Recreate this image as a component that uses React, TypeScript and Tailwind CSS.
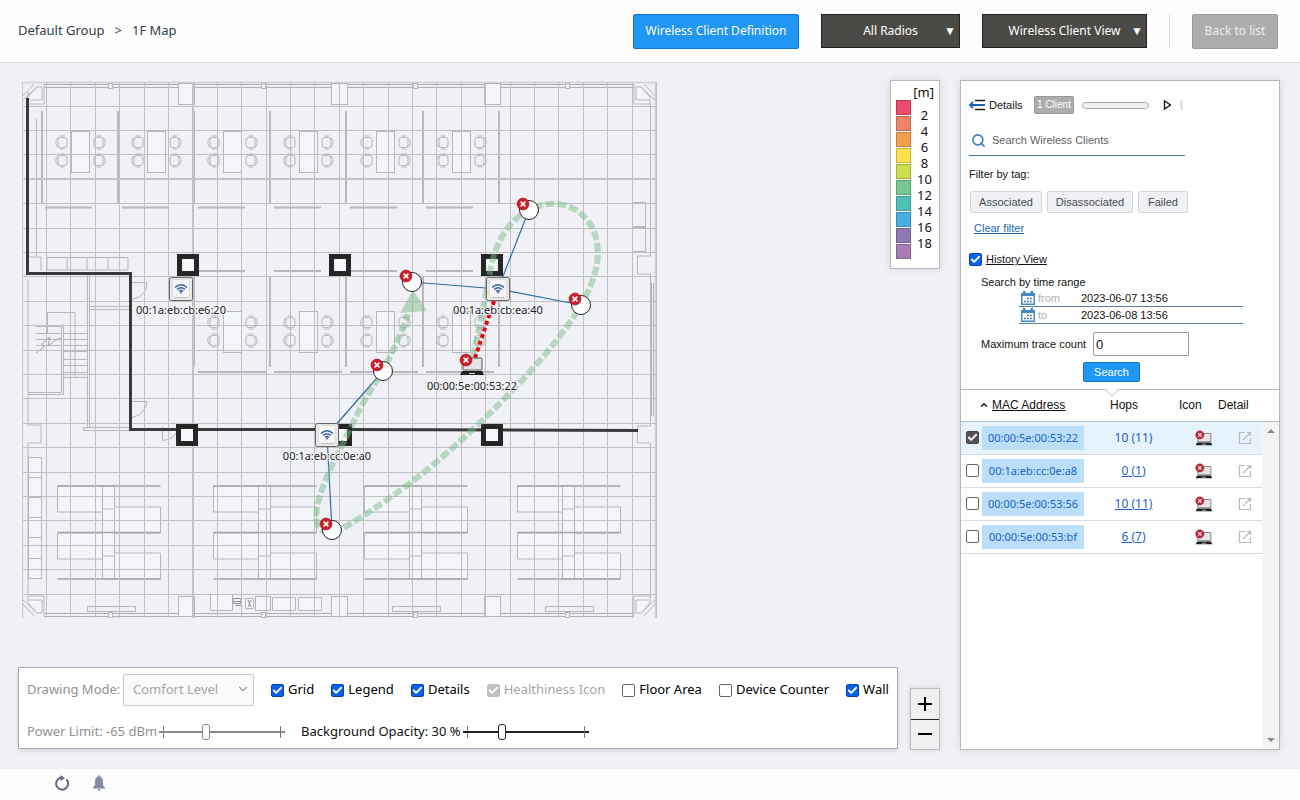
import React, { useState } from 'react';
import { Check, ChevronDown, ChevronUp, Search } from 'lucide-react';

const LEGEND_COLORS = [
  '#ee4a6e', '#ee8468', '#f2a04c', '#fde14a', '#cddd4c',
  '#76c893', '#4cc0b4', '#48aee2', '#9078b4', '#aa7cb4',
];
const LEGEND_LABELS = ['2', '4', '6', '8', '10', '12', '14', '16', '18'];

const CLIENTS = [
  { mac: '00:00:5e:00:53:22', hops: '10 (11)', selected: true },
  { mac: '00:1a:eb:cc:0e:a8', hops: '0 (1)', selected: false },
  { mac: '00:00:5e:00:53:56', hops: '10 (11)', selected: false },
  { mac: '00:00:5e:00:53:bf', hops: '6 (7)', selected: false },
];

const OPTIONS = [
  { id: 'grid', label: 'Grid', checked: true },
  { id: 'legend', label: 'Legend', checked: true },
  { id: 'details', label: 'Details', checked: true },
  { id: 'health', label: 'Healthiness Icon', checked: true, disabled: true },
  { id: 'floor', label: 'Floor Area', checked: false },
  { id: 'counter', label: 'Device Counter', checked: false },
  { id: 'wall', label: 'Wall', checked: true },
];

const ACCESS_POINTS = [
  { x: 181, y: 289, mac: '00:1a:eb:cb:e6:20' },
  { x: 498, y: 289, mac: '00:1a:eb:cb:ea:40' },
  { x: 327, y: 435, mac: '00:1a:eb:cc:0e:a0' },
];

const TRACE_POINTS = [
  [529, 210],
  [412, 282],
  [581, 305],
  [383, 371],
  [332, 530],
];

function Tick({ id, checked, disabled, tone = 'blue', label }: {
  id: string;
  checked: boolean;
  disabled?: boolean;
  tone?: 'blue' | 'gray';
  label?: string;
}) {
  const [on, setOn] = useState(checked);
  const fill = disabled
    ? 'border-[#c0c1c5] bg-[#c0c1c5]'
    : tone === 'gray'
      ? 'border-[#444] bg-[#555]'
      : 'border-[#0a3fc0] bg-[#0b62ee]';
  return (
    <span className="relative inline-flex shrink-0">
      <input
        id={id}
        type="checkbox"
        aria-label={label}
        checked={on}
        disabled={disabled}
        onChange={() => setOn(!on)}
        className={`size-[13px] appearance-none rounded-[2px] border ${on ? fill : 'border-[#666] bg-white'}`}
      />
      {on && <Check size={11} strokeWidth={4} className="pointer-events-none absolute top-px left-px text-white" />}
    </span>
  );
}

function ErrorBadge({ x, y, r = 6 }: { x: number; y: number; r?: number }) {
  const d = r * 0.4;
  return (
    <g>
      <circle cx={x} cy={y} r={r} fill="#cb1f2c" stroke="#8c1620" strokeWidth="0.6" />
      <path d={`M${x - d} ${y - d}L${x + d} ${y + d}M${x + d} ${y - d}L${x - d} ${y + d}`} stroke="#fff" strokeWidth={r * 0.27} />
    </g>
  );
}

function Chair({ x, y, flip }: { x: number; y: number; flip?: boolean }) {
  return (
    <g transform={`translate(${x} ${y}) scale(${flip ? -1 : 1} 1)`}>
      <rect x="-3.5" y="-5" width="9" height="10" rx="2.5" />
      <path d="M-2 -6.500H3M-2 6.500H3M-3.500 -5Q-8 0 -3.500 5" />
    </g>
  );
}

function DeskSet({ x, y }: { x: number; y: number }) {
  return (
    <g>
      <rect x={x} y={y} width="18" height="41" fill="#f4f5f8" />
      <Chair x={x - 10} y={y + 11} />
      <Chair x={x - 10} y={y + 29} />
      <Chair x={x + 28} y={y + 11} flip />
      <Chair x={x + 28} y={y + 29} flip />
    </g>
  );
}

function DeskCluster({ x }: { x: number }) {
  return (
    <g transform={`translate(${x} 486)`}>
      <g fill="#f4f5f8">
        <path d="M0 0H45V26H0ZM0 47H45V73H0ZM57 21H103V47H57ZM57 67H103V93H57Z" />
        <path d="M45 0H57V93H45ZM45 23H57M45 70H57" />
      </g>
      <path d="M0 0H103M0 46.500H103M0 93H103" stroke="#a4a4a4" strokeWidth="1.500" />
    </g>
  );
}

function Corner({ transform }: { transform: string }) {
  return (
    <g transform={transform}>
      <path d="M22 2V22H6V15L15 5H20V18H7" fill="#f4f5f8" />
      <path d="M1 14L12 2M1 18L15 5" />
    </g>
  );
}

function FloorPlan() {
  const cols = Array.from({ length: 26 }, (_, i) => Math.round(46 + 24.4 * i) + 0.5);
  const rows = Array.from({ length: 21 }, (_, i) => Math.round(105.6 + 24.4 * i) + 0.5);
  return (
    <g fill="none" stroke="#b6b7ba" strokeWidth="1">
      {/* outer shell */}
      <path d="M22.500 618V82.500H655.500V618" stroke="#cfcfd1" strokeWidth="1.500" />
      <path d="M44 84.500H634M44 87.500H634M44 613.500H634M44 616.500H634" stroke="#adaeb1" />
      <path d="M28 92V257M28 279V425H41V443H28V594M36.500 119V256" />
      <path d="M650.500 104V256H637.500V274H650.500V426H637.500V443H650.500V596" />
      <path d="M651.500 283V416M653.500 283V416" stroke="#adaeb1" />
      <Corner transform="translate(22 82)" />
      <Corner transform="translate(656 82) scale(-1 1)" />
      <Corner transform="translate(22 618) scale(1 -1)" />
      <Corner transform="translate(656 618) scale(-1 -1)" />
      {[178, 331, 484].map((x) => (
        <g key={x} fill="#f4f5f8">
          <rect x={x + 0.5} y="83.500" width="16" height="21" />
          <rect x={x + 0.5} y="596.500" width="16" height="20" />
        </g>
      ))}
      {[110, 263, 415, 567].map((x) => (
        <g key={x} fill="#f0f1f6">
          <rect x={x - 1.5} y="83.500" width="4" height="5" />
          <rect x={x - 1.5} y="612.500" width="4" height="5" />
        </g>
      ))}

      {/* desks and partitions */}
      {[71, 147, 223, 299, 376, 452].map((x) => <DeskSet key={x} x={x + 0.5} y={131.5} />)}
      {[223, 299, 376, 452].map((x) => <DeskSet key={x} x={x + 0.5} y={311.5} />)}
      <g stroke="#b8b8bb" strokeWidth="2">
        {[42, 118, 194, 270, 346, 423, 499].map((x) => <path key={x} d={`M${x} 111V203`} />)}
        {[194, 270, 346, 423, 499].map((x) => <path key={x} d={`M${x} 276V367`} />)}
        {[45, 122, 198, 274, 350, 426].map((x) => <path key={x} d={`M${x} 207.500h47`} />)}
        {[198, 274, 350, 426].map((x) => <path key={x} d={`M${x} 271h47M${x} 372h68`} />)}
      </g>
      {[57, 213, 364, 517].map((x) => <DeskCluster key={x} x={x + 0.5} />)}

      {/* stairwell */}
      <path d="M28 257H41V271M47 257.500H128V270H47ZM67 257V270M87 257V270M108 257V270" />
      <path d="M87.500 275V427M89.500 275V427M89 306.500H129M89 309.500H129M83.500 427.500H130M83.500 427V430.500H130" />
      <path d="M47.500 334V312.500H75V378M36 326.500H61M36 333.500H61M36 339.500H61M36 345.500H61M61.500 326V392.500H28M63.500 324V394.500H28" />
      <path d="M63 333.500H87M63 339.500H87M63 345.500H87M63 351.500H87M63 359.500H87M63 365.500H87M63 372.500H87M63 377.500H87" />
      <path d="M36 353L44 347L42 344L50 337L48 346L56 340L61 338" stroke="#a2a2a5" />
      <path d="M131 282.500H147Q147 296 132 299.500M131 401.500H147Q146 414 132 417.500M162.500 427V440.500Q172 440 176 433" />

      {/* cabinets, kitchen, benches */}
      <path d="M28.500 457.500H41.500V578.500H28.500ZM28 477.500H42M28 497.500H42M28 517.500H42M28 537.500H42M28 558.500H42" fill="#f4f5f8" />
      <path d="M632.500 202.500H645.500V226.500H632.500ZM632.500 227.500H645.500V251.500H632.500Z" />
      <path d="M87.500 606.500H135.500V611.500H87.500ZM392.500 606.500H440.500V611.500H392.500ZM545.500 606.500H593.500V611.500H545.500Z" />
      <path d="M210.500 594.500H232.500V610.500H210.500ZM245.500 598.500H253.500V608.500H245.500ZM255.500 596.500H270.500V610.500H255.500ZM272.500 597.500H295.500V610.500H272.500ZM298.500 597.500H321.500V610.500H298.500Z" fill="#f4f5f8" />
      <path d="M233 598.500H241V603.500H233ZM233 601.500H241M235 605.500H241M248 600L251 607M251 600L248 607" stroke="#929295" />

      {/* measuring grid */}
      <g stroke="#bfc0c2">
        {cols.map((x) => <path key={x} d={`M${x} 82V618`} />)}
        {rows.map((y) => <path key={y} d={`M23 ${y}H656`} />)}
      </g>
      <path d="M193 83V618M24 179H656" stroke="#c3c3c5" strokeWidth="2" />

      {/* walls */}
      <path d="M27.500 98V273.500H130.500V429.500H345L638 430.500" stroke="#3a3a3a" strokeWidth="3" />
      <g fill="#f6f7fa" stroke="#262626" strokeWidth="5">
        {[[188, 265], [340, 265], [492, 265], [187, 435], [341, 435], [492, 435]].map(([x, y]) => (
          <rect key={`${x}-${y}`} x={x - 8.5} y={y - 8.5} width="17" height="17" />
        ))}
      </g>
    </g>
  );
}

function AccessPoint({ x, y, mac }: { x: number; y: number; mac: string }) {
  return (
    <g>
      <rect x={x - 11.5} y={y - 11.5} width="23" height="23" rx="2" fill="#e9e9e9" stroke="#666" />
      <rect x={x - 8.5} y={y - 9.5} width="17" height="18" rx="1" fill="#f6f6f6" stroke="#d4d4d4" strokeWidth="0.7" />
      <g fill="none" stroke="#3c64a8" strokeWidth="1.500">
        <path d={`M${x - 6} ${y - 1.5}Q${x} ${y - 7} ${x + 6} ${y - 1.5}M${x - 4} ${y + 0.5}Q${x} ${y - 3} ${x + 4} ${y + 0.5}M${x - 2} ${y + 2.5}Q${x} ${y + 0.5} ${x + 2} ${y + 2.5}`} />
      </g>
      <circle cx={x} cy={y + 3.5} r="1" fill="#3c64a8" />
      <path d={`M${x - 5} ${y + 8.5}H${x + 6}`} stroke="#999" strokeDasharray="1 1.500" />
      <text x={x} y={y + 25} textAnchor="middle" fontSize="11" fill="#222" stroke="#f4f5f8" strokeWidth="2" paintOrder="stroke">{mac}</text>
    </g>
  );
}

function Laptop({ x, y }: { x: number; y: number }) {
  return (
    <g>
      <rect x={x - 9} y={y - 8} width="19" height="12" rx="1" fill="#e4e4e2" stroke="#555" />
      <path d={`M${x - 10} ${y + 5}H${x + 10}L${x + 12} ${y + 9}H${x - 12}Z`} fill="#1e1e1e" />
      <path d={`M${x - 3} ${y + 7.5}H${x + 3}`} stroke="#ddd" />
      <ErrorBadge x={x - 6} y={y - 6} />
    </g>
  );
}

function FloorMap() {
  return (
    <svg viewBox="22 80 636 540" width="636" height="540" role="img" aria-label="1F Map" className="ml-1 shrink-0">
      <FloorPlan />
      <g fill="none" stroke="#2f6ca8" strokeWidth="1.200">
        <path d="M498 289L529 210M498 289L412 282M498 289L581 305M327 435L383 371M327 435L332 530" />
      </g>
      <g opacity="0.5">
        <path
          d="M473 357C480 325 484 305 490 272C495 245 506 222 529 210C552 198 578 203 592 227C603 250 598 275 581 305C555 350 495 412 433 465C400 492 370 512 345 527C325 537 316 530 316 517C318 490 331 468 353 423C365 398 372 388 383 371C392 352 402 332 408 314"
          fill="none" stroke="#7dbd8a" strokeWidth="6" strokeDasharray="9 3"
        />
        <path d="M413 290L427 311L400 313Z" fill="#7dbd8a" />
      </g>
      <path d="M494 301L475 358" stroke="#e00b14" strokeWidth="4" strokeDasharray="4 3" />
      {ACCESS_POINTS.map((ap) => <AccessPoint key={ap.mac} {...ap} />)}
      {TRACE_POINTS.map(([x, y]) => (
        <g key={`${x}-${y}`}>
          <circle cx={x} cy={y} r="9.500" fill="#fff" stroke="#222" />
          <ErrorBadge x={x - 6} y={y - 6} />
        </g>
      ))}
      <Laptop x={472} y={366} />
      <text x="472" y="390" textAnchor="middle" fontSize="11" fill="#222" stroke="#f4f5f8" strokeWidth="2" paintOrder="stroke">00:00:5e:00:53:22</text>
    </svg>
  );
}

function Legend() {
  return (
    <div className="flex h-[189px] w-[50px] shrink-0 flex-col border border-[#b8b9bc] bg-white px-[5px] pt-[3px] text-[13px] leading-4 shadow-[0_0_8px_rgba(0,0,0,0.12)]">
      <div className="text-right">[m]</div>
      <div className="flex gap-1">
        <div className="flex flex-col gap-px">
          {LEGEND_COLORS.map((c) => (
            <span key={c} className="size-[15px] border border-black/20" style={{ backgroundColor: c }} />
          ))}
        </div>
        <div className="flex-1 pt-[7px] text-center">
          {LEGEND_LABELS.map((l) => <div key={l}>{l}</div>)}
        </div>
      </div>
    </div>
  );
}

function HeaderSelect({ label, className }: { label: string; className: string }) {
  return (
    <div className={`relative ${className}`}>
      <select aria-label={label} className="h-[34px] w-full appearance-none border border-[#222] bg-[#4b4a47] text-center text-xs text-white [text-align-last:center]">
        <option>{label}</option>
      </select>
      <span className="pointer-events-none absolute top-[9px] right-1 text-xs text-white">▼</span>
    </div>
  );
}

function Header() {
  return (
    <header className="flex h-[63px] items-center border-b border-[#dcdde1] bg-[#fdfdfd] pr-[22px] pl-[18px]">
      <nav className="flex gap-[10px] text-[13px] text-[#333c4c]">
        <a href="#group">Default Group</a>
        <span>&gt;</span>
        <a href="#map">1F Map</a>
      </nav>
      <div className="ml-auto flex items-center gap-[22px]">
        <button className="h-[35px] w-[166px] rounded-[2px] border border-[#0b74dd] bg-[#2196f3] text-xs text-white">Wireless Client Definition</button>
        <HeaderSelect label="All Radios" className="w-[139px]" />
        <HeaderSelect label="Wireless Client View" className="w-[165px]" />
        <span className="h-[35px] w-px bg-[#dcdde1]" />
        <button className="h-[35px] w-[86px] rounded-[2px] border border-[#999] bg-[#adadad] text-xs text-[#ececec]">Back to list</button>
      </div>
    </header>
  );
}

function Slider({ id, value, disabled }: { id: string; value: number; disabled?: boolean }) {
  const [v, setV] = useState(value);
  return (
    <span className={`relative flex h-4 w-[126px] items-center before:absolute before:left-1 before:h-3 before:w-px before:bg-[#777] after:absolute after:right-1 after:h-3 after:w-px after:bg-[#777] ${disabled ? 'text-[#8b8b8b]' : 'text-[#222]'}`}>
      <input
        id={id}
        type="range"
        value={v}
        disabled={disabled}
        onChange={(e) => setV(Number(e.target.value))}
        className="relative w-full appearance-none bg-transparent [&::-webkit-slider-runnable-track]:h-[2px] [&::-webkit-slider-runnable-track]:bg-current [&::-webkit-slider-thumb]:-mt-[7px] [&::-webkit-slider-thumb]:h-4 [&::-webkit-slider-thumb]:w-2 [&::-webkit-slider-thumb]:appearance-none [&::-webkit-slider-thumb]:rounded-[3px] [&::-webkit-slider-thumb]:border [&::-webkit-slider-thumb]:border-solid [&::-webkit-slider-thumb]:border-current [&::-webkit-slider-thumb]:bg-white"
      />
    </span>
  );
}

function Toolbar() {
  return (
    <div className="flex min-w-0 flex-1 flex-col gap-4 self-start border border-[#a9abb0] bg-white px-2 pt-[6px] pb-[6px] text-[13px] shadow-[0_2px_4px_rgba(0,0,0,0.1)]">
      <div className="flex items-center">
        <label htmlFor="mode" className="w-24 text-[#919191]">Drawing Mode:</label>
        <div className="relative">
          <select id="mode" disabled className="h-8 w-[131px] appearance-none rounded-[2px] border border-[#c8c8c8] bg-[#fafafa] pl-[9px] text-[#a5a5a5]">
            <option>Comfort Level</option>
          </select>
          <ChevronDown size={14} className="pointer-events-none absolute top-2 right-1 text-[#999]" />
        </div>
        <div className="ml-[17px] flex flex-1 items-center justify-between">
          {OPTIONS.map((o) => (
            <label key={o.id} htmlFor={o.id} className={`flex items-center gap-1 ${o.disabled ? 'text-[#a5a5a5]' : 'text-black'}`}>
              <Tick id={o.id} checked={o.checked} disabled={o.disabled} />
              {o.label}
            </label>
          ))}
        </div>
      </div>
      <div className="flex items-center gap-4">
        <div className="flex items-center gap-[2px] text-[#919191]">
          <label htmlFor="power">Power Limit: -65 dBm</label>
          <Slider id="power" value={36} disabled />
        </div>
        <div className="flex items-center gap-[2px]">
          <label htmlFor="opacity">Background Opacity: 30 %</label>
          <Slider id="opacity" value={30} />
        </div>
      </div>
    </div>
  );
}

function ZoomButtons() {
  return (
    <div className="flex h-[62px] w-[30px] flex-col self-end border border-[#bbb] bg-[#f0f0f0] shadow-[0_0_6px_rgba(0,0,0,0.12)]">
      <button aria-label="Zoom in" className="flex flex-1 items-center justify-center border-b border-[#222]">
        <svg width="14" height="14" stroke="#000" strokeWidth="2"><path d="M0 7H14M7 0V14" /></svg>
      </button>
      <button aria-label="Zoom out" className="flex flex-1 items-center justify-center">
        <svg width="14" height="14" stroke="#000" strokeWidth="2"><path d="M0 7H14" /></svg>
      </button>
    </div>
  );
}

function CalendarIcon() {
  return (
    <svg width="14" height="14" viewBox="0 0 14 14" className="shrink-0">
      <path d="M0 2H2V0H4.500V2H9.500V0H12V2H14V14H0Z" fill="#4487c7" />
      <rect x="1.500" y="5" width="11" height="7.500" fill="#fff" />
      <path d="M6 7.500H12M3 10.500H11" stroke="#2d6aa8" strokeWidth="1.700" strokeDasharray="1.700 1.300" />
    </svg>
  );
}

function TimeField({ id, label, value }: { id: string; label: string; value: string }) {
  return (
    <div className="ml-[50px] flex h-[17px] w-[224px] items-center border-b border-[#5a7da0] pl-[2px]">
      <CalendarIcon />
      <label htmlFor={id} className="w-[46px] pl-[3px] text-[#b0b0b0]">{label}</label>
      <input id={id} defaultValue={value} className="h-4 min-w-0 flex-1 outline-none" />
    </div>
  );
}

function DetailsForm() {
  return (
    <div className="relative h-[309px] border-b border-[#b4b6b9] px-2 pt-[14px] text-[11px] leading-4">
      <div className="flex h-5 items-center">
        <svg width="16" height="12" fill="none" strokeWidth="1.500" aria-hidden="true">
          <path d="M6 1.500H16M6 10.500H16" stroke="#222" />
          <path d="M1 6H16M4 3L1 6L4 9" stroke="#1464c8" strokeWidth="1.800" />
        </svg>
        <span className="ml-1 w-[45px]">Details</span>
        <button className="h-[18px] w-10 rounded-[2px] border border-[#979797] bg-[#adadad] text-[10px] text-white">1 Client</button>
        <span className="ml-2 h-[7px] w-[67px] rounded-full border border-[#a8a8a8] bg-[#efefef]" />
        <button aria-label="Play" className="ml-[14px]">
          <svg width="9" height="10" fill="none" stroke="#111" strokeWidth="1.300"><path d="M1.500 1V9L7.500 5Z" /></svg>
        </button>
        <span className="ml-2 h-[10px] w-[3px] bg-[#e4e4e4]" />
      </div>
      <div className="mt-[10px] flex h-[31px] w-[216px] items-center border-b border-[#44779f] pl-[2px]">
        <Search size={15} strokeWidth={2.5} className="text-[#3f7ebd]" />
        <input aria-label="Search Wireless Clients" placeholder="Search Wireless Clients" className="ml-[6px] min-w-0 flex-1 outline-none placeholder:text-[#606060]" />
      </div>
      <p className="mt-[10px]">Filter by tag:</p>
      <div className="mt-[9px] ml-px flex gap-[5px] text-[#444b54]">
        <button className="h-[22px] w-[72px] rounded-[2px] border border-[#d4d6db] bg-[#f0f1f5]">Associated</button>
        <button className="h-[22px] w-[86px] rounded-[2px] border border-[#d4d6db] bg-[#f0f1f5]">Disassociated</button>
        <button className="h-[22px] w-[50px] rounded-[2px] border border-[#d4d6db] bg-[#f0f1f5]">Failed</button>
      </div>
      <a href="#clear" className="mt-[7px] ml-[5px] block w-fit text-[#1668a6] underline">Clear filter</a>
      <div className="mt-[15px] flex items-center gap-1">
        <Tick id="history" checked />
        <label htmlFor="history" className="underline">History View</label>
      </div>
      <p className="mt-[7px] ml-3">Search by time range</p>
      <TimeField id="from" label="from" value="2023-06-07 13:56" />
      <TimeField id="to" label="to" value="2023-06-08 13:56" />
      <div className="mt-2 ml-3 flex items-center">
        <label htmlFor="trace" className="w-28">Maximum trace count</label>
        <input id="trace" defaultValue="0" className="h-6 w-24 rounded-[2px] border border-[#999] pl-[2px] text-[13px]" />
      </div>
      <button className="mt-[6px] ml-[114px] h-5 w-[57px] rounded-[2px] border border-[#0b74dd] bg-[#2196f3] text-white">Search</button>
      <svg width="16" height="9" className="absolute -bottom-2 left-[143px]" aria-hidden="true">
        <path d="M0 0H16V1L8 8L0 1Z" fill="#fff" />
        <path d="M1 1L8 8L15 1" fill="none" stroke="#c0c1c4" />
      </svg>
    </div>
  );
}

function ClientTable() {
  return (
    <div className="flex min-h-0 flex-1">
      <div className="flex-1">
        <table className="w-full table-fixed border-collapse">
          <colgroup>
            <col className="w-[21px]" />
            <col className="w-[102px]" />
            <col />
            <col className="w-[39px]" />
            <col className="w-11" />
          </colgroup>
          <thead>
            <tr className="h-[31px] border-b border-[#b4bcc2] text-left text-xs">
              <th colSpan={2} className="p-0 pl-[18px] font-normal">
                <button className="flex items-center gap-[3px]">
                  <ChevronUp size={10} strokeWidth={3} />
                  <span className="underline">MAC Address</span>
                </button>
              </th>
              <th className="p-0 pl-[26px] font-normal">Hops</th>
              <th className="p-0 font-normal">Icon</th>
              <th className="p-0 font-normal">Detail</th>
            </tr>
          </thead>
          <tbody className="font-['Noto_Sans',sans-serif] text-[11px] text-[#1a62c4]">
            {CLIENTS.map((c) => (
              <tr key={c.mac} className={`h-[33px] border-b border-[#d4dde4] ${c.selected ? 'bg-[#e6f2fc]' : ''}`}>
                <td className="p-0 pl-[5px] leading-none"><Tick id={c.mac} checked={c.selected} tone="gray" label={c.mac} /></td>
                <td className="p-0">
                  <div className="bg-[#bbdefb] text-center leading-6 whitespace-nowrap">{c.mac}</div>
                </td>
                <td className="p-0 pl-1 text-center text-xs">
                  {c.selected ? c.hops : <a href="#hops" className="underline">{c.hops}</a>}
                </td>
                <td className="p-0 pl-4">
                  <svg width="18" height="16" viewBox="459 353 26 23" aria-label="Disconnected laptop"><Laptop x={472} y={366} /></svg>
                </td>
                <td className="p-0 pl-5">
                  <button aria-label="Open detail" className="block">
                    <svg width="14" height="14" fill="none" stroke="#b6bbc1" strokeWidth="1.200">
                      <path d="M7 1.500H1.500V12.500H12.500V7M9 1.500H12.500V5M12.500 1.500L5 9" />
                    </svg>
                  </button>
                </td>
              </tr>
            ))}
          </tbody>
        </table>
      </div>
      <div className="flex w-[17px] flex-col">
        <div className="h-8 border-b border-[#b4bcc2]" />
        <div className="flex flex-1 flex-col items-center justify-between bg-[#f3f3f3] py-[7px]">
          <svg width="8" height="4" fill="#8a8a8a"><path d="M0 4L4 0L8 4Z" /></svg>
          <svg width="8" height="4" fill="#8a8a8a"><path d="M0 0L4 4L8 0Z" /></svg>
        </div>
      </div>
    </div>
  );
}

export default function App() {
  return (
    <div className="flex min-h-screen flex-col bg-[#f0f1f6] font-['Noto_Sans',sans-serif] text-[#111]">
      <Header />
      <main className="flex flex-1 gap-5 pt-[17px] pr-5 pb-[19px] pl-[18px]">
        <section className="flex min-w-0 flex-1 flex-col justify-between">
          <div className="flex items-start justify-between">
            <FloorMap />
            <Legend />
          </div>
          <div className="flex min-h-[83px] gap-3">
            <Toolbar />
            <ZoomButtons />
          </div>
        </section>
        <aside className="flex w-80 shrink-0 flex-col border border-[#b4b6b9] bg-white font-['Liberation_Sans',Arial,sans-serif] shadow-[0_0_8px_rgba(0,0,0,0.12)]">
          <DetailsForm />
          <ClientTable />
        </aside>
      </main>
      <footer className="flex h-[31px] items-center gap-[22px] bg-[#fdfdfd] pb-1 pl-[54px]">
        <button aria-label="Refresh">
          <svg width="16" height="16" fill="none" stroke="#626980" strokeWidth="2">
            <path d="M12.500 4.500A6 6 0 1 1 6.500 2.800" />
            <path d="M6 0L11 3L6.500 6Z" fill="#626980" stroke="none" />
          </svg>
        </button>
        <button aria-label="Notifications">
          <svg width="14" height="16" fill="#858ca4">
            <path d="M7 0Q8 0 8 1.500Q11 2.500 11 6V10L13 12.500V13.500H1V12.500L3 10V6Q3 2.500 6 1.500Q6 0 7 0ZM5 14H9L7 16Z" />
          </svg>
        </button>
      </footer>
    </div>
  );
}
